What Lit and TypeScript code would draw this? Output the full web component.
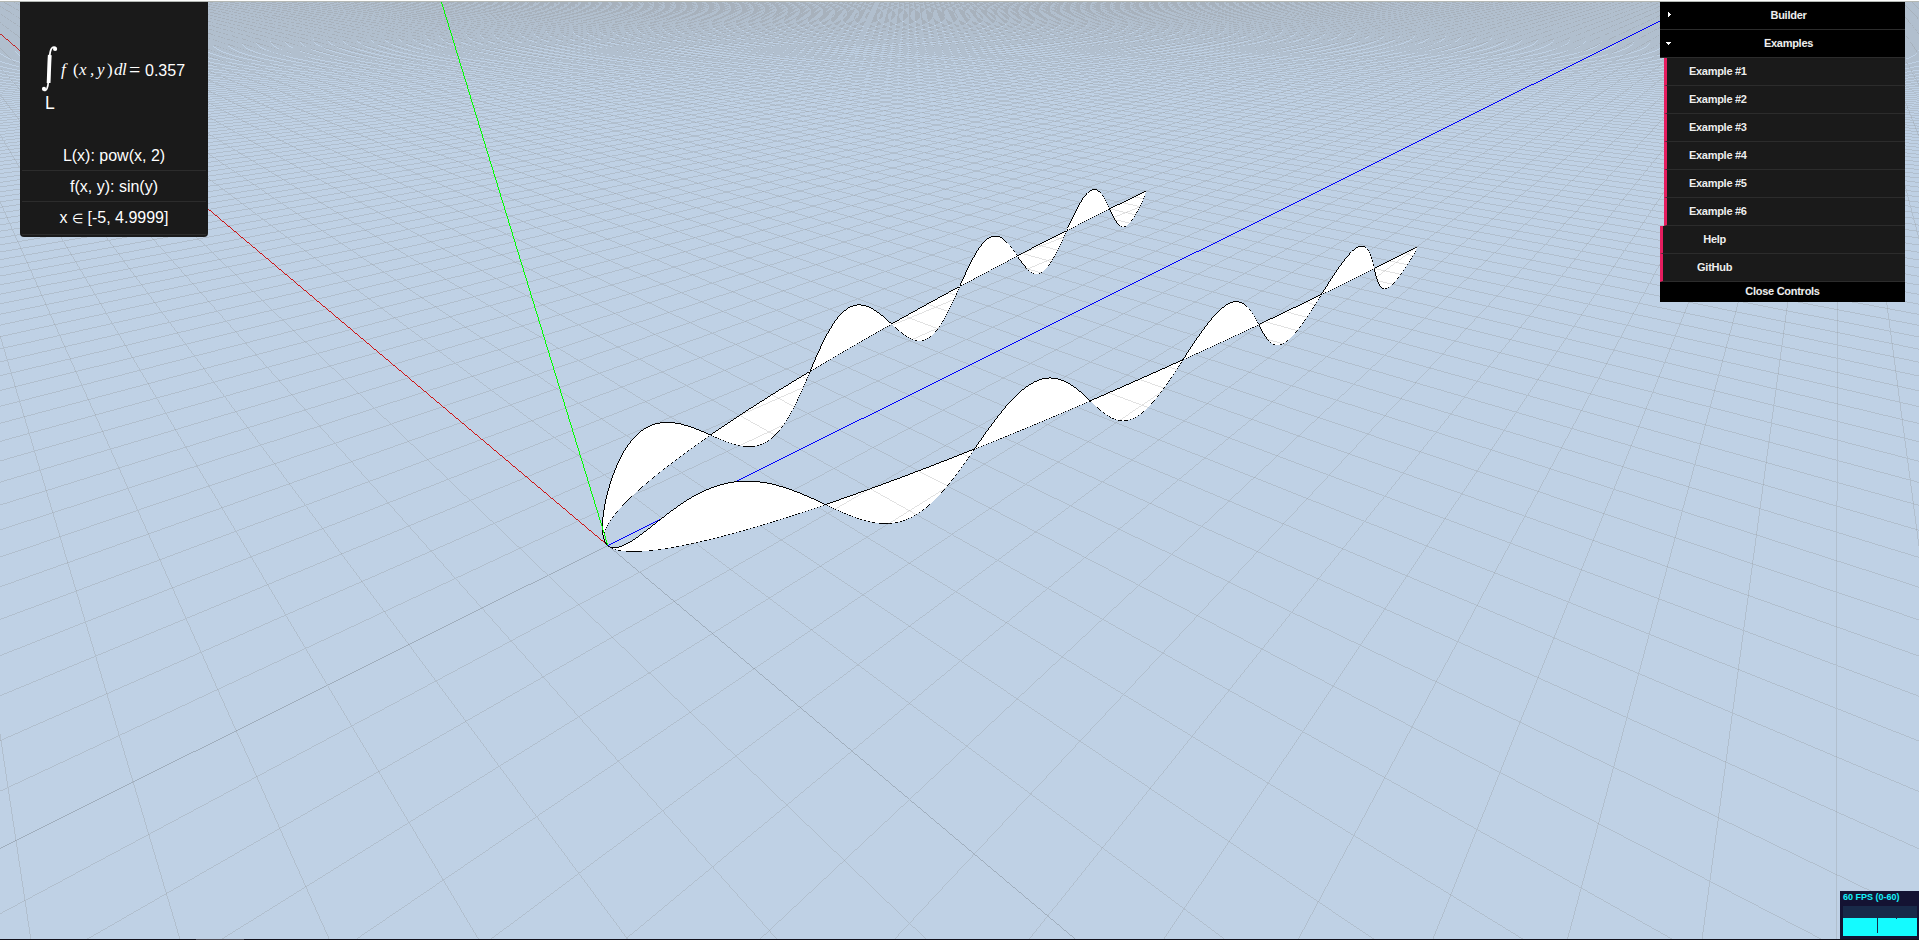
import { LitElement, html, css } from "lit";
import { customElement, property, query } from "lit/decorators.js";

type Vec3 = [number, number, number];
type Rgb = [number, number, number];

const VIEW_W = 1919;
const VIEW_H = 937;

/** Perspective camera with a 60 degree vertical field of view. */
class Camera {
  private readonly focal = VIEW_H / 2 / Math.tan(Math.PI / 6);
  private readonly sy: number;
  private readonly cy: number;
  private readonly sp: number;
  private readonly cp: number;

  constructor(private readonly eye: Vec3, yaw: number, pitch: number) {
    this.sy = Math.sin(yaw);
    this.cy = Math.cos(yaw);
    this.sp = Math.sin(pitch);
    this.cp = Math.cos(pitch);
  }

  /** World point to camera axes: right, down, forward. */
  view(p: Vec3): Vec3 {
    const dx = p[0] - this.eye[0];
    const dy = p[1] - this.eye[1];
    const dz = p[2] - this.eye[2];
    const h = this.sy * dx + this.cy * dz;
    return [this.sy * dz - this.cy * dx, -this.sp * h - this.cp * dy, this.cp * h - this.sp * dy];
  }

  /** Camera axes to pixel coordinates and inverse depth. */
  screen(v: Vec3): Vec3 {
    return [VIEW_W / 2 + (this.focal * v[0]) / v[2], VIEW_H / 2 + (this.focal * v[1]) / v[2], 1 / v[2]];
  }
}

/** Small depth-buffered rasterizer without antialiasing. */
class Raster {
  readonly data = new Uint8ClampedArray(VIEW_W * VIEW_H * 4);
  private readonly depth = new Float64Array(VIEW_W * VIEW_H);

  constructor(private readonly camera: Camera, bg: Rgb) {
    for (let i = 0; i < this.data.length; i += 4) {
      this.data[i] = bg[0];
      this.data[i + 1] = bg[1];
      this.data[i + 2] = bg[2];
      this.data[i + 3] = 255;
    }
  }

  private plot(x: number, y: number, q: number, c: Rgb, alpha: number, write: boolean) {
    const i = y * VIEW_W + x;
    if (q < this.depth[i]) return;
    if (write) this.depth[i] = q;
    const o = i * 4;
    for (let k = 0; k < 3; k++) this.data[o + k] = this.data[o + k] * (1 - alpha) + c[k] * alpha;
  }

  /** A bias above 1 pulls the line towards the viewer in the depth test. */
  line(p0: Vec3, p1: Vec3, c: Rgb, alpha = 1, write = true, bias = 1) {
    let a = this.camera.view(p0);
    let b = this.camera.view(p1);
    const near = 0.1;
    if (a[2] < near && b[2] < near) return;
    const cut = (u: Vec3, v: Vec3): Vec3 => {
      const t = (near - u[2]) / (v[2] - u[2]);
      return [u[0] + t * (v[0] - u[0]), u[1] + t * (v[1] - u[1]), near];
    };
    if (a[2] < near) a = cut(a, b);
    else if (b[2] < near) b = cut(b, a);
    let s = this.camera.screen(a);
    let e = this.camera.screen(b);
    const major = Math.abs(e[0] - s[0]) > Math.abs(e[1] - s[1]) ? 0 : 1;
    const minor = 1 - major;
    if (s[major] > e[major]) [s, e] = [e, s];
    const limit = major === 0 ? VIEW_W : VIEW_H;
    const other = major === 0 ? VIEW_H : VIEW_W;
    const from = Math.max(0, Math.ceil(s[major] - 0.5));
    const to = Math.min(limit, Math.ceil(e[major] - 0.5));
    const span = e[major] - s[major];
    for (let m = from; m < to; m++) {
      const t = (m + 0.5 - s[major]) / span;
      const n = Math.floor(s[minor] + t * (e[minor] - s[minor]));
      if (n < 0 || n >= other) continue;
      const q = (s[2] + t * (e[2] - s[2])) * bias;
      if (major === 0) this.plot(m, n, q, c, alpha, write);
      else this.plot(n, m, q, c, alpha, write);
    }
  }

  triangle(p0: Vec3, p1: Vec3, p2: Vec3, c: Rgb) {
    const [a, b, d] = [p0, p1, p2].map((p) => this.camera.screen(this.camera.view(p)));
    const area = (b[0] - a[0]) * (d[1] - a[1]) - (b[1] - a[1]) * (d[0] - a[0]);
    if (area === 0) return;
    const x0 = Math.max(0, Math.floor(Math.min(a[0], b[0], d[0])));
    const x1 = Math.min(VIEW_W - 1, Math.ceil(Math.max(a[0], b[0], d[0])));
    const y0 = Math.max(0, Math.floor(Math.min(a[1], b[1], d[1])));
    const y1 = Math.min(VIEW_H - 1, Math.ceil(Math.max(a[1], b[1], d[1])));
    for (let y = y0; y <= y1; y++) {
      for (let x = x0; x <= x1; x++) {
        const px = x + 0.5;
        const py = y + 0.5;
        const u = ((b[0] - px) * (d[1] - py) - (b[1] - py) * (d[0] - px)) / area;
        const v = ((d[0] - px) * (a[1] - py) - (d[1] - py) * (a[0] - px)) / area;
        const w = 1 - u - v;
        if (u < 0 || v < 0 || w < 0) continue;
        this.plot(x, y, u * a[2] + v * b[2] + w * d[2], c, 1, true);
      }
    }
  }
}

@customElement("integral-scene")
class IntegralScene extends LitElement {
  static styles = css`
    :host { display: block; }
    canvas { display: block; }
  `;

  @query("canvas") private canvas!: HTMLCanvasElement;

  render() {
    return html`<canvas width=${VIEW_W} height=${VIEW_H}></canvas>`;
  }

  firstUpdated() {
    const camera = new Camera([-11.2787, 8.3956, -3.8774], 0.7338, 0.5855);
    const r = new Raster(camera, [191, 209, 229]);

    r.line([0, 0, 0], [300, 0, 0], [255, 0, 0], 1, false);

    const steps = 1000;
    const base: Vec3[] = [];
    const top: Vec3[] = [];
    for (let i = 0; i <= steps; i++) {
      const x = -5 + (9.9999 * i) / steps;
      const y = x * x;
      base.push([x, 0, y]);
      top.push([x, Math.sin(y), y]);
    }
    for (let i = 0; i < steps; i++) {
      r.triangle(base[i], top[i], top[i + 1], [255, 255, 255]);
      r.triangle(base[i], top[i + 1], base[i + 1], [255, 255, 255]);
    }
    for (let i = 0; i < steps; i++) {
      r.line(base[i], base[i + 1], [0, 0, 0]);
      r.line(top[i], top[i + 1], [0, 0, 0]);
    }

    const half = 250;
    for (let k = -half; k <= half; k++) {
      const c: Rgb = k === 0 ? [68, 68, 68] : [136, 136, 136];
      r.line([-half, 0, k], [half, 0, k], c, 0.25);
      r.line([k, 0, -half], [k, 0, half], c, 0.25);
    }
    r.line([0, 0, 0], [0, 0, 300], [0, 0, 255], 1, true, 1.02);
    r.line([0, 0, 0], [0, 300, 0], [0, 255, 0]);

    this.canvas.getContext("2d")!.putImageData(new ImageData(r.data, VIEW_W, VIEW_H), 0, 0);
  }
}

@customElement("formula-panel")
class FormulaPanel extends LitElement {
  static styles = css`
    :host {
      display: flex;
      flex-direction: column;
      box-sizing: border-box;
      width: 188px;
      height: 235px;
      padding: 0 2px;
      background: #1a1a1a;
      border-radius: 0 0 4px 4px;
      color: #fff;
      font: 16px/18px "Liberation Sans", Arial, sans-serif;
    }
    .formula {
      display: flex;
      height: 138px;
      padding: 43px 0 0 19px;
      box-sizing: border-box;
    }
    .integral { display: flex; flex-direction: column; width: 20px; }
    .integral svg { display: block; }
    .bound { padding: 1px 0 0 4px; font-size: 17.5px; line-height: 18px; }
    .body {
      display: grid;
      grid-template-columns: 12px 6px 11px 7px 10px 7px 8px 7px 16px auto;
      padding-top: 15px;
      height: 20px;
      line-height: 20px;
      white-space: pre;
    }
    .math { font-family: "Liberation Serif", serif; font-size: 17px; font-style: italic; }
    .up { font-style: normal; }
    .eq { font-family: "Liberation Serif", serif; font-size: 20px; }
    .value { padding-top: 1px; }
    .row { height: 30px; border-bottom: 1px solid #2c2c2c; line-height: 32px; text-align: center; }
    .row.last { height: 32px; line-height: 32px; }
    .in { font-size: 13px; }
  `;

  render() {
    const tokens = ["f", "(", "x", ",", "y", ")", "d", "l"];
    return html`
      <div class="formula">
        <div class="integral">
          <svg width="17" height="48" viewBox="0 0 17 48">
            <path d="M2.8 45.2C5.4 46.6 7 43 7.4 36L8.6 12C9 4.6 10.8 0.9 14.4 2.4" fill="none" stroke="#fff" stroke-width="1.7" />
            <path d="M7.6 38C8 30 8.2 18 8.8 10" fill="none" stroke="#fff" stroke-width="3.8" />
            <circle cx="14.1" cy="3.9" r="2.1" fill="#fff" />
            <circle cx="3" cy="43.9" r="2.1" fill="#fff" />
          </svg>
          <span class="bound">L</span>
        </div>
        <div class="body">
          ${tokens.map((t) => html`<span class="math ${/[a-z,]/.test(t) ? "" : "up"}">${t}</span>`)}
          <span class="eq">=</span><span class="value">0.357</span>
        </div>
      </div>
      <div class="row">L(x): pow(x, 2)</div>
      <div class="row">f(x, y): sin(y)</div>
      <div class="row last">x <span class="in">∈</span> [-5, 4.9999]</div>
    `;
  }
}

@customElement("control-panel")
class ControlPanel extends LitElement {
  @property({ type: Array }) examples = [1, 2, 3, 4, 5, 6];

  static styles = css`
    :host {
      display: block;
      width: 245px;
      color: #eee;
      font: bold 11px/27px "Liberation Sans", Arial, sans-serif;
      letter-spacing: -0.27px;
      text-shadow: 0 -1px 0 #111;
    }
    .title {
      display: flex;
      height: 27px;
      background: #000;
      border-bottom: 1px solid #2c2c2c;
    }
    .arrow { width: 16px; height: 27px; }
    .label { flex: 1; padding-right: 4px; text-align: center; }
    .folder { margin-left: 4px; }
    .item {
      height: 27px;
      padding: 0 4px 0 5px;
      background: #1a1a1a;
      border-bottom: 1px solid #2c2c2c;
      border-left: 3px solid #e61d5f;
    }
    .name { display: block; width: 40%; text-align: center; }
    .close { height: 20px; background: #000; line-height: 19px; text-align: center; }
  `;

  private item(label: string) {
    return html`<div class="item"><span class="name">${label}</span></div>`;
  }

  render() {
    return html`
      <div class="title">
        <svg class="arrow" viewBox="0 0 16 27"><path d="M8 10h1v1h1v1h1v1h-1v1h-1v1h-1z" fill="#fff" shape-rendering="crispEdges" /></svg>
        <span class="label">Builder</span>
      </div>
      <div class="title">
        <svg class="arrow" viewBox="0 0 16 27"><path d="M6 12h5v1h-1v1h-1v1h-1v-1h-1v-1h-1z" fill="#fff" shape-rendering="crispEdges" /></svg>
        <span class="label">Examples</span>
      </div>
      <div class="folder">${this.examples.map((n) => this.item(`Example #${n}`))}</div>
      ${this.item("Help")} ${this.item("GitHub")}
      <div class="close">Close Controls</div>
    `;
  }
}

@customElement("fps-meter")
class FpsMeter extends LitElement {
  static styles = css`
    :host {
      display: block;
      box-sizing: border-box;
      width: 80px;
      height: 48px;
      padding: 2px 3px 3px;
      background: #141333;
      color: #14f3fb;
      font: bold 9px/13px "Liberation Sans", Helvetica, sans-serif;
      white-space: nowrap;
    }
    .text { height: 13px; line-height: 9px; }
    svg { display: block; }
  `;

  render() {
    return html`
      <div class="text">60 FPS (0-60)</div>
      <svg width="74" height="30" viewBox="0 0 74 30" shape-rendering="crispEdges">
        <rect width="74" height="30" fill="#182a49" />
        <rect y="12" width="74" height="18" fill="#14fbff" />
        <rect x="34" y="12" width="1" height="15" fill="#182a49" />
        <rect x="53" y="12" width="1" height="1" fill="#182a49" />
      </svg>
    `;
  }
}

@customElement("app-root")
class AppRoot extends LitElement {
  static styles = css`
    :host {
      display: block;
      position: relative;
      width: 1919px;
      height: 940px;
      overflow: hidden;
    }
    .frame {
      display: grid;
      grid-template-rows: 1px 1px 937px 1px;
      height: 940px;
    }
    .edge-top { background: #fdfdfd; }
    .edge-line { background: #b4b8b4; }
    .edge-bottom { display: flex; background: #11101a; }
    .tab { width: 48px; margin-left: 196px; background: #4c4b54; }
    .formula { position: absolute; top: 2px; left: 20px; }
    .controls { position: absolute; top: 2px; right: 14px; }
    .fps { position: absolute; right: -1px; bottom: 1px; }
  `;

  render() {
    return html`
      <div class="frame">
        <div class="edge-top"></div>
        <div class="edge-line"></div>
        <integral-scene></integral-scene>
        <div class="edge-bottom"><div class="tab"></div></div>
      </div>
      <formula-panel class="formula"></formula-panel>
      <control-panel class="controls"></control-panel>
      <fps-meter class="fps"></fps-meter>
    `;
  }
}
